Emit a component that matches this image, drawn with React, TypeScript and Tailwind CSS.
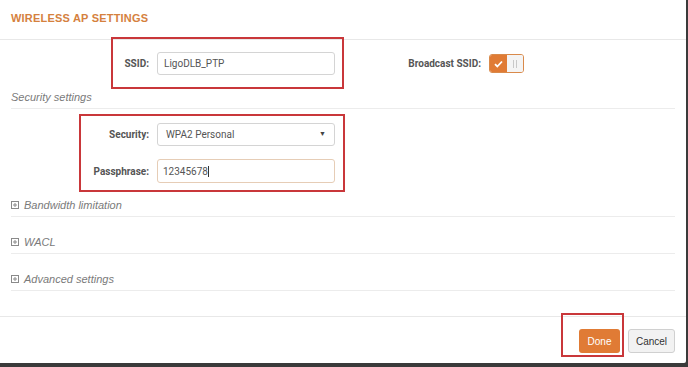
import React from 'react';

const roboto = { fontFamily: 'Roboto, "Liberation Sans", sans-serif' };

function PlusBox() {
  return (
    <svg width="8" height="8" viewBox="0 0 8 8" className="mr-[5px] shrink-0">
      <rect x="0.5" y="0.5" width="7" height="7" fill="none" stroke="#8a8a8a" strokeWidth="1" />
      <path d="M2 4h4M4 2v4" stroke="#8a8a8a" strokeWidth="1" />
    </svg>
  );
}

function Section({ title, h = 'h-[37px]' }: { title: string; h?: string }) {
  return (
    <div className={`${h} mx-[11px] flex items-end pb-[5px] border-b border-[#ececec]`}>
      <div className="flex items-center text-[11px] leading-[12px] italic text-[#7a7a7a]">
        <PlusBox />
        <span>{title}</span>
      </div>
    </div>
  );
}

export default function App() {
  return (
    <div className="w-[688px] h-[367px] bg-[#3a3a3a] overflow-hidden" style={{ fontFamily: '"Liberation Sans", Arial, sans-serif' }}>
      <div className="relative w-[686px] h-[363px] bg-white rounded-br-[2px] flex flex-col">
        {/* header */}
        <div className="h-[40px] px-[11px] flex items-center border-b border-[#e8e8e8]">
          <h1 className="text-[11px] font-bold text-[#d5813e] tracking-[0.2px] -mt-[3px]">WIRELESS AP SETTINGS</h1>
        </div>

        {/* body */}
        <div className="flex-1">
          <div className="h-[47px] flex items-center">
            <label className="w-[149px] text-right text-[10px] font-bold text-[#555]" style={roboto}>SSID:</label>
            <div className="ml-[8px] w-[178px] h-[23px] border border-[#d4d4d4] rounded-[3px] flex items-center px-[6px] text-[10px] text-[#555]" style={roboto}>
              LigoDLB_PTP
            </div>
            <label className="w-[146px] text-right text-[10px] font-bold text-[#555]" style={roboto}>Broadcast SSID:</label>
            <div className="ml-[8px] w-[35px] h-[19px] rounded-[3px] border border-[#d98a4b] flex overflow-hidden">
              <div className="w-[17px] h-full bg-[#e07b35] flex items-center justify-center">
                <svg width="9" height="8" viewBox="0 0 9 8">
                  <path d="M1 4.2l2.3 2.3L8 1.5" fill="none" stroke="#fff" strokeWidth="1.8" />
                </svg>
              </div>
              <div className="flex-1 bg-[#f4f4f4] flex items-center justify-center gap-[2px]">
                <span className="w-px h-[8px] bg-[#c8c8c8]" />
                <span className="w-px h-[8px] bg-[#c8c8c8]" />
              </div>
            </div>
          </div>

          <div className="h-[22px] mx-[11px] flex items-center border-b border-[#ececec] text-[11px] italic text-[#7a7a7a] pb-[1px]">
            Security settings
          </div>

          <div className="mt-[14px] flex items-center h-[23px]">
            <label className="w-[149px] text-right text-[10px] font-bold text-[#555]" style={roboto}>Security:</label>
            <div className="ml-[8px] w-[178px] h-[23px] border border-[#d4d4d4] rounded-[3px] flex items-center justify-between px-[8px] text-[10px] text-[#555]" style={roboto}>
              <span>WPA2 Personal</span>
              <span className="text-[7px] text-[#444]">▼</span>
            </div>
          </div>

          <div className="mt-[13px] flex items-center h-[24px]">
            <label className="w-[149px] text-right text-[10px] font-bold text-[#555]" style={roboto}>Passphrase:</label>
            <div className="ml-[8px] w-[178px] h-[24px] border border-[#e6cdb6] rounded-[3px] flex items-center px-[5px] text-[10px] text-[#555]" style={roboto}>
              <span>12345678</span>
              <span className="w-px h-[11px] bg-[#333]" />
            </div>
          </div>

          <Section title="Bandwidth limitation" h="h-[34px]" />
          <Section title="WACL" />
          <Section title=" Advanced settings" />
        </div>

        {/* footer */}
        <div className="h-[47px] border-t border-[#e8e8e8] flex items-start justify-end gap-[8px] pr-[11px] pt-[12px]">
          <button className="w-[41px] h-[24px] bg-[#e07b35] rounded-[3px] text-[10px] text-white">Done</button>
          <button className="w-[47px] h-[24px] bg-[#f2f2f2] border border-[#d0d0d0] rounded-[3px] text-[10px] text-[#333]">Cancel</button>
        </div>

        {/* annotation boxes */}
        <div className="absolute left-[111px] top-[37px] w-[233px] h-[52px] border-2 border-[#c9373a]" />
        <div className="absolute left-[79px] top-[114px] w-[266px] h-[78px] border-2 border-[#c9373a]" />
        <div className="absolute left-[561px] top-[313px] w-[63px] h-[44px] border-2 border-[#c9373a]" />
      </div>
    </div>
  );
}
